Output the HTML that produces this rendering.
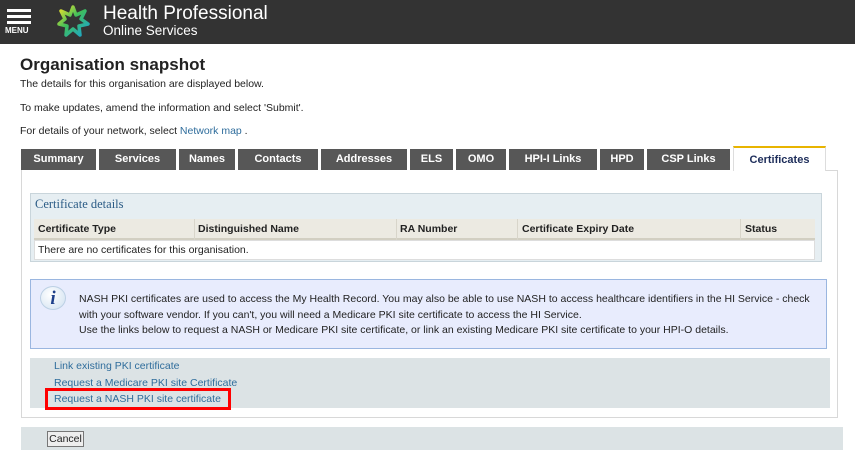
<!DOCTYPE html>
<html><head><style>
*{margin:0;padding:0;box-sizing:border-box}
body{width:855px;height:461px;background:#fff;font-family:"Liberation Sans",Arial,sans-serif;position:relative;overflow:hidden;color:#222}
.a{position:absolute}
.hdr{left:0;top:0;width:855px;height:44px;background:#333}
.t{font-size:10.5px;white-space:nowrap}
.tab{position:absolute;top:149px;height:21px;background:#575757;color:#fff;font-weight:bold;font-size:11px;text-align:center;line-height:21px}
.link{color:#2f6d9c;font-size:10.5px;white-space:nowrap}
</style></head><body>
<div class="a hdr"></div>
<div class="a" style="left:7px;top:9px;width:24px;height:3px;background:#fff"></div>
<div class="a" style="left:7px;top:15px;width:24px;height:3px;background:#fff"></div>
<div class="a" style="left:7px;top:21px;width:24px;height:3px;background:#fff"></div>
<div class="a" style="left:5px;top:26px;color:#fff;font-size:8px;font-weight:bold">MENU</div>
<svg class="a" style="left:57px;top:5px" width="33" height="33" viewBox="0 0 33 33">
<defs><linearGradient id="g" x1="0" y1="0" x2="1" y2="1"><stop offset="0" stop-color="#f5e12a"/><stop offset=".45" stop-color="#3fbf5a"/><stop offset="1" stop-color="#1aa3d8"/></linearGradient></defs>
<path d="M16 2 L19 10 L28 6 L24 14 L31 19 L22 21 L23 30 L16 24 L9 30 L10 21 L2 19 L8 14 L4 6 L13 10 Z" fill="none" stroke="url(#g)" stroke-width="3.5" stroke-linejoin="round"/>
</svg>
<div class="a" style="left:103px;top:3px;color:#fff;font-size:19px;white-space:nowrap">Health Professional</div>
<div class="a" style="left:103px;top:23px;color:#fff;font-size:13.5px;white-space:nowrap">Online Services</div>

<div class="a" style="left:20px;top:55px;font-size:17px;font-weight:bold;white-space:nowrap">Organisation snapshot</div>
<div class="a t" style="left:20px;top:78px">The details for this organisation are displayed below.</div>
<div class="a t" style="left:20px;top:102px">To make updates, amend the information and select 'Submit'.</div>
<div class="a t" style="left:20px;top:125px">For details of your network, select <span style="color:#2f6d9c">Network map</span> .</div>

<div class="tab" style="left:21px;width:75px">Summary</div>
<div class="tab" style="left:99px;width:77px">Services</div>
<div class="tab" style="left:179px;width:56px">Names</div>
<div class="tab" style="left:238px;width:80px">Contacts</div>
<div class="tab" style="left:321px;width:86px">Addresses</div>
<div class="tab" style="left:410px;width:43px">ELS</div>
<div class="tab" style="left:456px;width:50px">OMO</div>
<div class="tab" style="left:509px;width:88px">HPI-I Links</div>
<div class="tab" style="left:600px;width:44px">HPD</div>
<div class="tab" style="left:647px;width:83px">CSP Links</div>
<div class="a" style="left:21px;top:170px;width:817px;height:248px;border:1px solid #d8d8d8;border-top:none"></div>
<div class="a" style="left:826px;top:170px;width:12px;height:1px;background:#d8d8d8"></div>
<div class="a" style="left:733px;top:146px;width:93px;height:25px;background:#fff;border-top:2px solid #e8b400;border-left:1px solid #ddd;border-right:1px solid #ddd;color:#1d2d5a;font-weight:bold;font-size:11px;text-align:center;line-height:25px">Certificates</div>

<div class="a" style="left:30px;top:193px;width:792px;height:69px;background:#e6eef2;border:1px solid #c9d5db"></div>
<div class="a" style="left:35px;top:197px;font-family:'Liberation Serif',serif;font-size:12.5px;color:#2c5c86;white-space:nowrap">Certificate details</div>
<div class="a" style="left:34px;top:219px;width:781px;height:21px;background:#eceae2;border-bottom:2px solid #d2cfc2"></div>
<div class="a" style="left:34px;top:240px;width:781px;height:20px;background:#fff;border:1px solid #ddd"></div>
<div class="a t" style="left:38px;top:223px;font-weight:bold">Certificate Type</div>
<div class="a t" style="left:198px;top:223px;font-weight:bold">Distinguished Name</div>
<div class="a t" style="left:400px;top:223px;font-weight:bold">RA Number</div>
<div class="a t" style="left:522px;top:223px;font-weight:bold">Certificate Expiry Date</div>
<div class="a t" style="left:745px;top:223px;font-weight:bold">Status</div>
<div class="a" style="left:194px;top:219px;width:1px;height:21px;background:#d8d5ca"></div>
<div class="a" style="left:396px;top:219px;width:1px;height:21px;background:#d8d5ca"></div>
<div class="a" style="left:517px;top:219px;width:1px;height:21px;background:#d8d5ca"></div>
<div class="a" style="left:740px;top:219px;width:1px;height:21px;background:#d8d5ca"></div>
<div class="a t" style="left:38px;top:244px">There are no certificates for this organisation.</div>

<div class="a" style="left:30px;top:279px;width:797px;height:70px;background:#e8ecfd;border:1px solid #9ab6e0"></div>
<div class="a" style="left:40px;top:286px;width:26px;height:24px;border-radius:50%;background:radial-gradient(circle at 40% 35%,#fff,#cfe0f0);border:1px solid #bcd0e4;color:#1d3f8a;font-family:'Liberation Serif',serif;font-style:italic;font-weight:bold;font-size:19px;text-align:center;line-height:23px">i</div>
<div class="a t" style="left:79px;top:292px;line-height:15.5px">NASH PKI certificates are used to access the My Health Record. You may also be able to use NASH to access healthcare identifiers in the HI Service - check<br>with your software vendor. If you can't, you will need a Medicare PKI site certificate to access the HI Service.<br>Use the links below to request a NASH or Medicare PKI site certificate, or link an existing Medicare PKI site certificate to your HPI-O details.</div>

<div class="a" style="left:30px;top:358px;width:800px;height:50px;background:#dce3e5"></div>
<div class="a link" style="left:54px;top:360px">Link existing PKI certificate</div>
<div class="a link" style="left:54px;top:377px">Request a Medicare PKI site Certificate</div>
<div class="a" style="left:45px;top:388px;width:186px;height:22px;border:3px solid #f00;background:#dce3e5"></div>
<div class="a link" style="left:54px;top:393px">Request a NASH PKI site certificate</div>

<div class="a" style="left:21px;top:427px;width:822px;height:23px;background:#dce3e5"></div>
<div class="a" style="left:47px;top:431px;width:37px;height:16px;background:#eee;border:1px solid #777;font-size:10.5px;text-align:center;line-height:14px">Cancel</div>
</body></html>
